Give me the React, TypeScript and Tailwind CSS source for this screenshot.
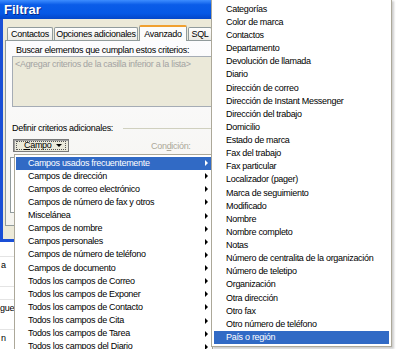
const menuFields = [
  "Campos usados frecuentemente",
  "Campos de dirección",
  "Campos de correo electrónico",
  "Campos de número de fax y otros",
  "Miscelánea",
  "Campos de nombre",
  "Campos personales",
  "Campos de número de teléfono",
  "Campos de documento",
  "Todos los campos de Correo",
  "Todos los campos de Exponer",
  "Todos los campos de Contacto",
  "Todos los campos de Cita",
  "Todos los campos de Tarea",
  "Todos los campos del Diario",
];

const frequentFields = [
  "Categorías",
  "Color de marca",
  "Contactos",
  "Departamento",
  "Devolución de llamada",
  "Diario",
  "Dirección de correo",
  "Dirección de Instant Messenger",
  "Dirección del trabajo",
  "Domicilio",
  "Estado de marca",
  "Fax del trabajo",
  "Fax particular",
  "Localizador (pager)",
  "Marca de seguimiento",
  "Modificado",
  "Nombre",
  "Nombre completo",
  "Notas",
  "Número de centralita de la organización",
  "Número de teletipo",
  "Organización",
  "Otra dirección",
  "Otro fax",
  "Otro número de teléfono",
  "País o región",
];

function Tab({ label, width, selected }: { label: string; width: number; selected?: boolean }) {
  if (selected) {
    return (
      <div
        style={{ width }}
        className="relative z-10 -mb-px flex h-[16px] items-center justify-center rounded-t-[2px] border border-b-0 border-[#919b9c] border-t-[2px] border-t-[#f0a030] bg-[#fcfcfb]"
      >
        {label}
      </div>
    );
  }
  return (
    <div
      style={{ width }}
      className="flex h-[13px] items-center justify-center rounded-t-[2px] border border-b-0 border-[#919b9c] bg-[linear-gradient(to_bottom,#ffffff,#ecebe5)]"
    >
      {label}
    </div>
  );
}

function FilterWindow() {
  return (
    <div className="flex h-[242px] w-[240px] flex-col border-b-[3px] border-l-[3px] border-[#1a4fd6] bg-[#ece9d8]">
      <div className="-ml-[3px] flex h-[19px] shrink-0 items-center bg-[linear-gradient(to_bottom,#3d8dff,#0a5ce8_25%,#0558e6_70%,#0346c9)] pl-[4px] text-[13px] font-bold tracking-normal text-white [text-shadow:1px_1px_0_#0a2a8a]">
        Filtrar
      </div>

      <div className="flex items-end gap-px pl-[4px] pt-[6px]">
        <Tab label="Contactos" width={46} />
        <Tab label="Opciones adicionales" width={84} />
        <Tab label="Avanzado" width={48} selected />
        <Tab label="SQL" width={24} />
      </div>

      <div className="ml-[2px] flex h-[186px] flex-col border border-[#919b9c] bg-[linear-gradient(to_bottom,#fcfcfe,#f4f3ee)]">
        <div className="mt-[4px] h-[11px] pl-[10px] leading-[11px]">Buscar elementos que cumplan estos criterios:</div>
        <div className="ml-[6px] h-[51px] border border-[#a5acb5] bg-[#ebe9d9] pl-[2px] pt-[2px] leading-[11px] text-[#a3a3a3]">
          &lt;Agregar criterios de la casilla inferior a la lista&gt;
        </div>

        <div className="ml-[6px] mt-[16px] flex h-[11px] items-center gap-[10px] leading-[11px]">
          <span>Definir criterios adicionales:</span>
          <div className="h-px flex-1 bg-[#d0d0bf]" />
        </div>

        <div className="mt-[5px] flex items-start">
          <div className="ml-[7px] flex h-[13px] w-[56px] items-center justify-between border border-[#7a7a7a] bg-[#ebeadb] px-[2px] shadow-[inset_1px_1px_0_#a0a0a0]">
            <div className="flex h-[9px] flex-1 items-center justify-between border border-dotted border-[#555] pl-[7px] pr-[3px]">
              <span>
                <span className="underline">C</span>ampo
              </span>
              <span className="h-0 w-0 border-x-[3px] border-t-[3px] border-x-transparent border-t-black" />
            </div>
          </div>
          <span className="ml-[82px] mt-[3px] text-[#aca899]">
            Con<span className="underline">d</span>ición:
          </span>
        </div>

        <div className="ml-[4px] mt-[5px] h-[56px] border border-[#919b9c] bg-white" />
      </div>
    </div>
  );
}

function OutlookRows() {
  return (
    <div className="flex w-[240px] flex-1 flex-col bg-white">
      <div className="h-[15px] border-b border-[#e4e4e4]" />
      <div className="flex h-[16px] items-center pl-[1px]">a</div>
      <div className="h-[14px] border-b border-[#e4e4e4]" />
      <div className="h-[13px] border-b border-[#e4e4e4]" />
      <div className="flex h-[16px] items-center">gues</div>
      <div className="h-[14px] border-b border-[#e4e4e4]" />
      <div className="flex h-[16px] items-center pl-[1px]">n</div>
    </div>
  );
}

function FieldMenu() {
  return (
    <div className="absolute left-[14px] top-[154px] w-[199px] border border-[#aca899] bg-white px-px pt-[1.5px]">
      {menuFields.map((f, i) => (
        <div
          key={f}
          className={
            "flex h-[13.13px] items-center justify-between pl-[12px] pr-[3px] " +
            (i === 0 ? "bg-[#316ac5] text-white" : "")
          }
        >
          <span>{f}</span>
          <span
            className={
              "h-0 w-0 border-y-[3px] border-l-[3px] border-y-transparent " +
              (i === 0 ? "border-l-white" : "border-l-black")
            }
          />
        </div>
      ))}
    </div>
  );
}

function FrequentMenu() {
  return (
    <div className="absolute left-[211px] top-[-1px] w-[181px] border border-[#aca899] bg-white px-[2px] pb-[2px] pt-[2.7px] shadow-[2px_2px_2px_rgba(0,0,0,0.2)]">
      {frequentFields.map((f, i) => (
        <div
          key={f}
          className={
            "flex h-[13.13px] items-center pl-[12px] " +
            (i === frequentFields.length - 1 ? "bg-[#316ac5] text-white" : "")
          }
        >
          {f}
        </div>
      ))}
    </div>
  );
}

export default function App() {
  return (
    <div className="relative h-[349px] w-[400px] overflow-hidden bg-white font-['Liberation_Sans',Arial,sans-serif] text-[9px] leading-none tracking-[-0.3px] text-black">
      <div className="flex h-full flex-col">
        <FilterWindow />
        <OutlookRows />
      </div>
      <FieldMenu />
      <FrequentMenu />
    </div>
  );
}
